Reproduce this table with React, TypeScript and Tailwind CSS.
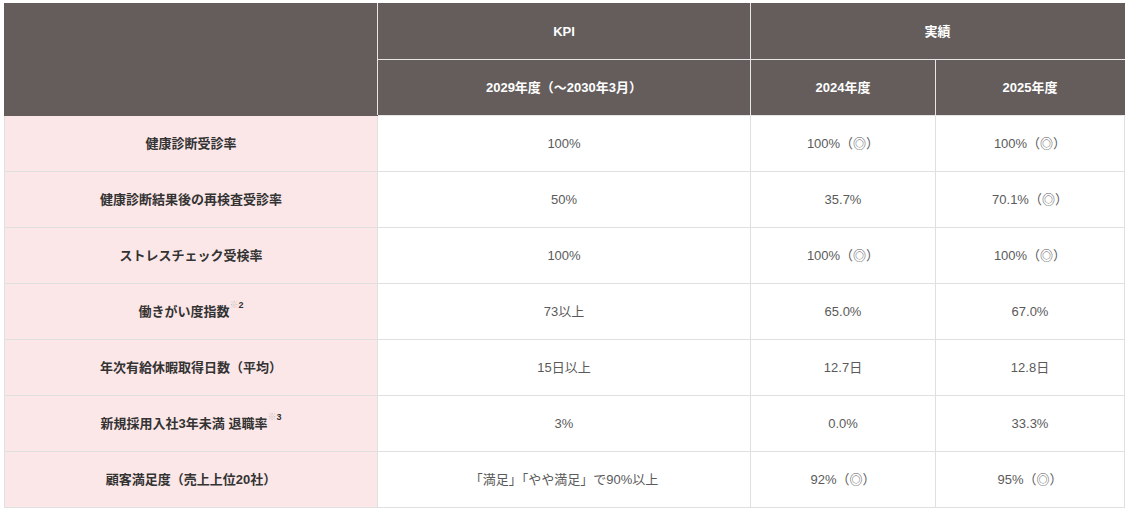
import React from 'react';

const rows = [
  { label: '健康診断受診率', kpi: '100%', y2024: '100%（◎）', y2025: '100%（◎）' },
  { label: '健康診断結果後の再検査受診率', kpi: '50%', y2024: '35.7%', y2025: '70.1%（◎）' },
  { label: 'ストレスチェック受検率', kpi: '100%', y2024: '100%（◎）', y2025: '100%（◎）' },
  { label: '働きがい度指数', note: '2', kpi: '73以上', y2024: '65.0%', y2025: '67.0%' },
  { label: '年次有給休暇取得日数（平均）', kpi: '15日以上', y2024: '12.7日', y2025: '12.8日' },
  { label: '新規採用入社3年未満 退職率', note: '3', kpi: '3%', y2024: '0.0%', y2025: '33.3%' },
  { label: '顧客満足度（売上上位20社）', kpi: '「満足」「やや満足」で90%以上', y2024: '92%（◎）', y2025: '95%（◎）' },
];

const App: React.FC = () => {
  return (
    <div className="w-[1130px] h-[512px] bg-white pt-[3px] pl-[4px] font-['Liberation_Sans','Noto_Sans_CJK_JP',sans-serif] text-[13px]">
      <table className="w-[1120px] border-collapse table-fixed border border-[#dddddd]">
        <colgroup>
          <col className="w-[373px]" />
          <col className="w-[373px]" />
          <col className="w-[185px]" />
          <col className="w-[189px]" />
        </colgroup>
        <thead className="bg-[#645d5c] text-white font-bold">
          {/* Header row 1 */}
          <tr className="h-[56px]">
            <th rowSpan={2} className="border border-[#645d5c] border-r-[#e6e6e6]"></th>
            <th className="border border-[#e6e6e6] border-t-[#645d5c]">KPI</th>
            <th colSpan={2} className="border border-[#e6e6e6] border-t-[#645d5c] border-r-[#645d5c]">実績</th>
          </tr>
          {/* Header row 2 */}
          <tr className="h-[56px]">
            <th className="border border-[#e6e6e6]">2029年度（～2030年3月）</th>
            <th className="border border-[#e6e6e6]">2024年度</th>
            <th className="border border-[#e6e6e6] border-r-[#645d5c]">2025年度</th>
          </tr>
        </thead>
        <tbody>
          {rows.map((row, index) => (
            <tr key={index} className="h-[56px]">
              <th className="border border-[#e0e0e0] bg-[#fce7e8] text-[#333333] font-bold">
                {row.label}
                {row.note && (
                  <sup className="text-[9px] -top-[8px]">
                    <span className="text-[#c4c4c4] font-normal">※</span>
                    {row.note}
                  </sup>
                )}
              </th>
              <td className="border border-[#e0e0e0] text-center text-[#5a5a5a]">{row.kpi}</td>
              <td className="border border-[#e0e0e0] text-center text-[#5a5a5a]">{row.y2024}</td>
              <td className="border border-[#e0e0e0] text-center text-[#5a5a5a]">{row.y2025}</td>
            </tr>
          ))}
        </tbody>
      </table>
    </div>
  );
};

export default App;
